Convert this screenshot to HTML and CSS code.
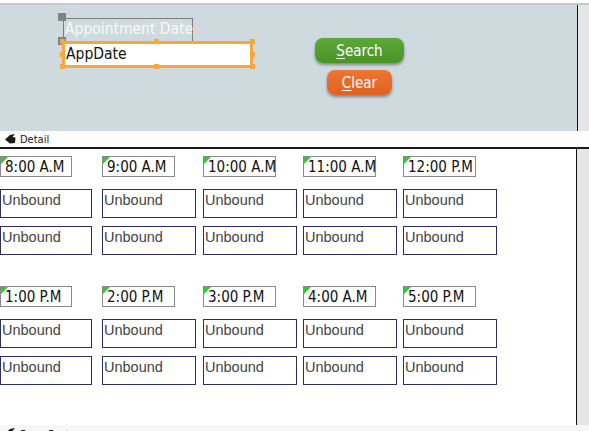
FILE: index.html
```html
<!DOCTYPE html>
<html>
<head>
<meta charset="utf-8">
<link rel="stylesheet" href="styles.css">
</head>
<body>
<div class="page">
  <div class="topstrip"></div>
  <div class="section header-section">
    <div class="canvas header-canvas">
      <div class="ctl lbl-date">Appointment Date</div>
      <div class="ctl handle h1"></div>
      <div class="ctl handle h2"></div>
      <div class="ctl txt-date">AppDate</div>
      <div class="ctl oh" style="left:60px;top:34px"></div>
      <div class="ctl oh" style="left:154px;top:34px"></div>
      <div class="ctl oh" style="left:250px;top:34px"></div>
      <div class="ctl oh" style="left:60px;top:47px"></div>
      <div class="ctl oh" style="left:250px;top:47px"></div>
      <div class="ctl oh" style="left:60px;top:59px"></div>
      <div class="ctl oh" style="left:154px;top:59px"></div>
      <div class="ctl oh" style="left:250px;top:59px"></div>
      <div class="ctl btn btn-search"><span class="u">S</span>earch</div>
      <div class="ctl btn btn-clear"><span class="u">C</span>lear</div>
    </div>
    <div class="gutter"></div>
  </div>
  <div class="bar detail-bar">
    <svg class="bar-icon" width="11" height="10" viewBox="0 0 11 10"><path d="M0 5.5 L5 1 L10 0 L7.5 3 L10.5 3.5 L10 9 L5 9.5 Z" fill="#1a1a1a"/></svg>
    <span>Detail</span>
  </div>
  <div class="section detail-section">
    <div class="canvas detail-canvas">
      <div class="grid">
        <div class="tlabel">8:00 A.M</div>
        <div class="tlabel">9:00 A.M</div>
        <div class="tlabel">10:00 A.M</div>
        <div class="tlabel">11:00 A.M</div>
        <div class="tlabel">12:00 P.M</div>
        <div class="ub first">Unbound</div>
        <div class="ub">Unbound</div>
        <div class="ub">Unbound</div>
        <div class="ub">Unbound</div>
        <div class="ub">Unbound</div>
        <div class="ub first">Unbound</div>
        <div class="ub">Unbound</div>
        <div class="ub">Unbound</div>
        <div class="ub">Unbound</div>
        <div class="ub">Unbound</div>
      </div>
      <div class="grid block2">
        <div class="tlabel">1:00 P.M</div>
        <div class="tlabel">2:00 P.M</div>
        <div class="tlabel">3:00 P.M</div>
        <div class="tlabel">4:00 A.M</div>
        <div class="tlabel">5:00 P.M</div>
        <div class="ub first">Unbound</div>
        <div class="ub">Unbound</div>
        <div class="ub">Unbound</div>
        <div class="ub">Unbound</div>
        <div class="ub">Unbound</div>
        <div class="ub first">Unbound</div>
        <div class="ub">Unbound</div>
        <div class="ub">Unbound</div>
        <div class="ub">Unbound</div>
        <div class="ub">Unbound</div>
      </div>
    </div>
    <div class="gutter"></div>
  </div>
  <div class="bar footer-bar">
    <svg class="bar-icon" width="11" height="10" viewBox="0 0 11 10"><path d="M0 5.5 L5 1 L10 0 L7.5 3 L10.5 3.5 L10 9 L5 9.5 Z" fill="#1a1a1a"/></svg>
    <span>Form Footer</span>
  </div>
</div>
</body>
</html>
```

FILE: styles.css
```css
html, body {
  margin: 0;
  padding: 0;
  background: #ffffff;
}
.page {
  width: 589px;
  height: 431px;
  overflow: hidden;
  display: flex;
  flex-direction: column;
  font-family: "DejaVu Sans Condensed", "DejaVu Sans", sans-serif;
}
.topstrip {
  height: 3px;
  background: #ffffff;
  border-bottom: 2px solid #c9c9c9;
  flex: none;
}
.section {
  display: flex;
  flex: none;
}
.canvas {
  width: 577px;
  border-right: 1px solid #111;
  flex: none;
  position: relative;
}
.gutter {
  flex: 1;
  background: #e6e6e6;
}
.header-section {
  height: 126px;
}
.header-canvas {
  background: #cfdadf;
}
.ctl {
  position: absolute;
  box-sizing: border-box;
  white-space: nowrap;
}
.lbl-date {
  left: 63px;
  top: 13px;
  width: 130px;
  height: 23px;
  border: 1px solid #7c7c7c;
  border-bottom: none;
  color: #f6f8f9;
  font-size: 15.5px;
  line-height: 21px;
  padding-left: 1px;
}
.handle {
  width: 8px;
  height: 8px;
  background: #7d858c;
  left: 58px;
}
.h1 { top: 8px; }
.h2 { top: 32px; }
.txt-date {
  left: 62px;
  top: 36px;
  width: 191px;
  height: 27px;
  border: 3px solid #f6a840;
  background: #ffffff;
  color: #111;
  font-size: 15.5px;
  line-height: 20px;
  padding-left: 1px;
}
.oh {
  width: 5px;
  height: 5px;
  background: #f6a840;
}
.btn {
  height: 25px;
  border-radius: 8px;
  color: #ffffff;
  font-size: 15px;
  line-height: 25px;
  padding-top: 1px;
  text-align: center;
  box-shadow: 0 2px 3px rgba(40, 40, 40, 0.45);
}
.btn .u {
  text-decoration: underline;
  text-underline-offset: 2px;
}
.btn-search {
  left: 315px;
  top: 33px;
  width: 89px;
  background: linear-gradient(#5ea83a, #4a9424);
}
.btn-clear {
  left: 327px;
  top: 65px;
  width: 65px;
  background: linear-gradient(#ee7532, #e2621f);
}
.bar {
  flex: none;
  display: flex;
  align-items: center;
  gap: 4px;
  padding-left: 5px;
  font-family: "DejaVu Sans Condensed", "DejaVu Sans", sans-serif;
  font-size: 11px;
  color: #222;
  white-space: nowrap;
}
.detail-bar {
  height: 16px;
  background: #fdfdfd;
  border-bottom: 2px solid #1b1b1b;
}
.bar-icon {
  flex: none;
}
.detail-section {
  height: 276px;
}
.detail-canvas {
  background: #ffffff;
  padding-top: 7px;
  box-sizing: border-box;
}
.grid {
  display: grid;
  grid-template-columns: 102px 101px 100px 100px 100px;
  row-gap: 8px;
}
.block2 {
  margin-top: 31px;
}
.tlabel {
  position: relative;
  width: 73px;
  height: 21px;
  box-sizing: border-box;
  border: 1px solid #8a8a8a;
  font-size: 15px;
  line-height: 20px;
  color: #111;
  padding-left: 4px;
  margin-bottom: 4px;
  white-space: nowrap;
  overflow: hidden;
}
.tlabel:first-child {
  width: 72px;
}
.tlabel::before {
  content: "";
  position: absolute;
  left: 0;
  top: 0;
  width: 0;
  height: 0;
  border-top: 7px solid #2ccc2c;
  border-right: 7px solid transparent;
}
.ub {
  width: 94px;
  height: 29px;
  box-sizing: border-box;
  border: 1px solid #2e2e5c;
  font-family: "Liberation Sans", Arial, sans-serif;
  font-size: 14.5px;
  color: #444;
  line-height: 21px;
  padding-left: 1px;
  white-space: nowrap;
}
.ub.first {
  width: 92px;
}
.footer-bar {
  height: 14px;
  background: #f7f7f7;
  align-items: flex-start;
  padding-top: 3px;
  box-sizing: border-box;
}
```
